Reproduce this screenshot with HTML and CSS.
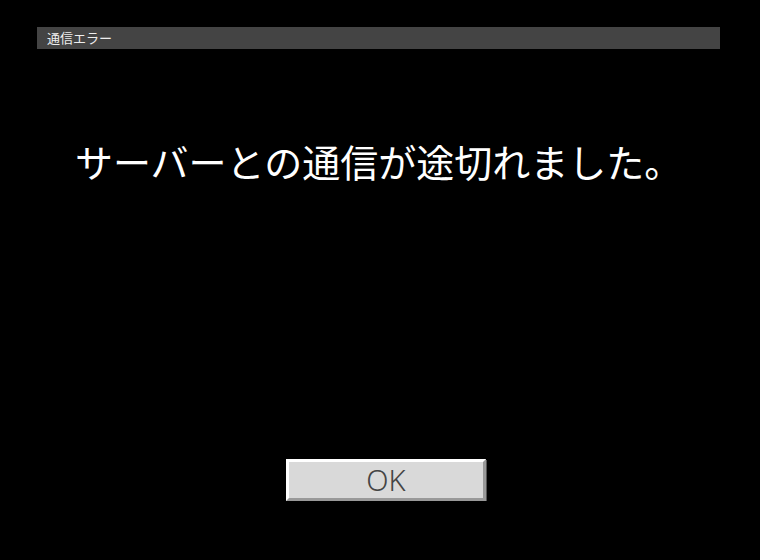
FILE: index.html
```html
<!DOCTYPE html>
<html>

<head>
  <title>通信エラー</title>
  <link rel="stylesheet" href="styles.css">
</head>

<body>
  <div class="dialog">
    <div class="titlebar">通信エラー</div>
    <div class="message">サーバーとの通信が途切れました。</div>
    <div class="footer">
      <button class="okBtn" id="ok">OK</button>
    </div>
  </div>
</body>

</html>
```

FILE: styles.css
```css
body {
  margin: 0;
  background-color: #000;
  font-family: "Noto Sans CJK JP", "Noto Sans", sans-serif;
}
.dialog {
  width: 683px;
  padding: 27px 0 0 37px;
}
.titlebar {
  height: 22px;
  line-height: 22px;
  padding-left: 10px;
  background-color: #444;
  color: #eee;
  font-size: 13px;
}
.message {
  margin-top: 90px;
  padding-left: 38px;
  height: 44px;
  line-height: 44px;
  color: #fff;
  font-size: 38px;
  white-space: nowrap;
}
.footer {
  margin-top: 276px;
  padding-left: 249px;
}
.okBtn {
  display: block;
  width: 200px;
  height: 42px;
  padding: 0;
  background-color: #d9d9d9;
  color: #444;
  font-family: "Noto Sans", sans-serif;
  font-size: 29px;
  font-weight: 300;
  line-height: 36px;
  border-top: 3px solid #fff;
  border-left: 3px solid #fff;
  border-right: 3px solid #999;
  border-bottom: 3px solid #999;
  box-shadow: 1px 1px 0 #555;
  outline: none;
}
```
